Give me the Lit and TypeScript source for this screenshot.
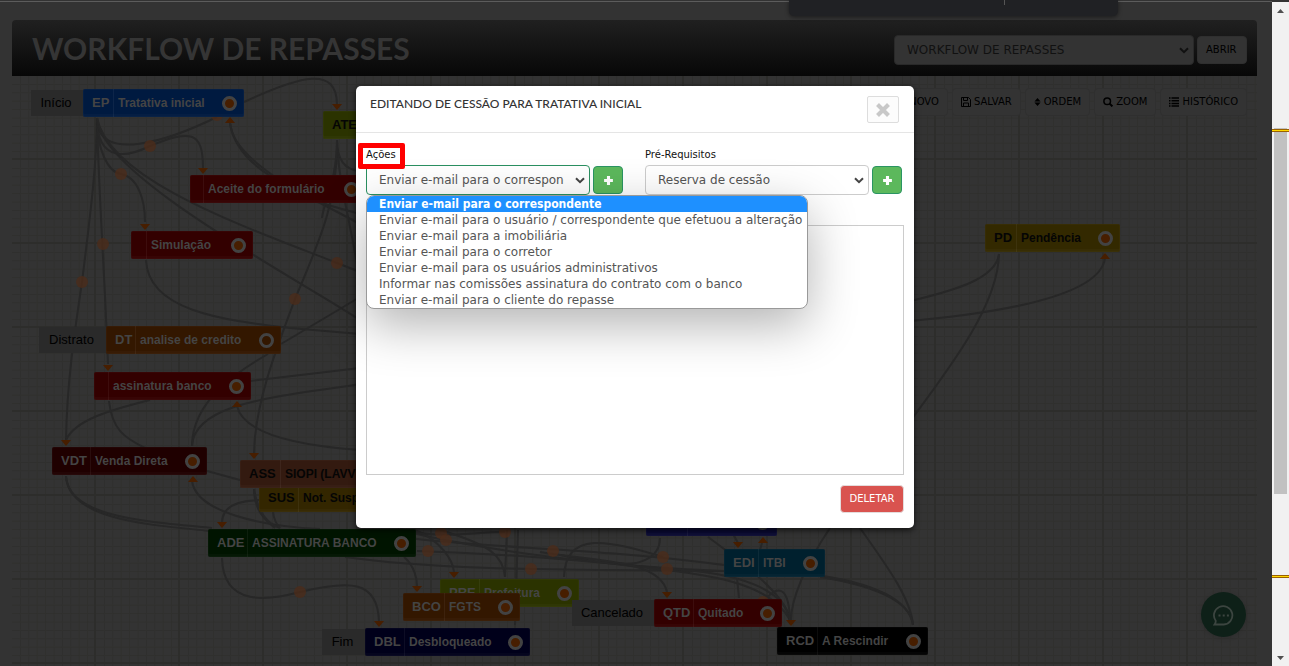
import { LitElement, html, css, svg, nothing } from "lit";
import { customElement, property } from "lit/decorators.js";
import { styleMap } from "lit/directives/style-map.js";
import { classMap } from "lit/directives/class-map.js";

interface StepNode {
  x: number;
  y: number;
  w: number;
  codeW: number;
  code: string;
  name: string;
  color: string;
  dark?: boolean;
  open?: boolean;
  tag?: string;
  tagW?: number;
}

/* Canvas coordinates, measured from the top left corner of the grid. */
const NODES: StepNode[] = [
  { x: 71, y: 13, w: 161, codeW: 31, code: "EP", name: "Tratativa inicial", color: "#001a40", tag: "Início", tagW: 52 },
  { x: 311, y: 35, w: 120, codeW: 40, code: "ATE", name: "", color: "#2b3300", dark: true },
  { x: 178, y: 99, w: 176, codeW: 14, code: "", name: "Aceite do formulário", color: "#330000" },
  { x: 119, y: 155, w: 122, codeW: 16, code: "", name: "Simulação", color: "#330000" },
  { x: 94, y: 250, w: 175, codeW: 30, code: "DT", name: "analise de credito", color: "#331700", open: true, tag: "Distrato", tagW: 67 },
  { x: 82, y: 296, w: 157, codeW: 15, code: "", name: "assinatura banco", color: "#330000" },
  { x: 40, y: 371, w: 155, codeW: 39, code: "VDT", name: "Venda Direta", color: "#1f0000" },
  { x: 247, y: 408, w: 150, codeW: 40, code: "SUS", name: "Not. Suspensa", color: "#332600", dark: true },
  { x: 228, y: 384, w: 160, codeW: 41, code: "ASS", name: "SIOPI (LAVVI)", color: "#331a10", dark: true },
  { x: 196, y: 453, w: 208, codeW: 40, code: "ADE", name: "ASSINATURA BANCO", color: "#001400" },
  { x: 428, y: 503, w: 139, codeW: 40, code: "PRE", name: "Prefeitura", color: "#2b3300" },
  { x: 391, y: 517, w: 117, codeW: 42, code: "BCO", name: "FGTS", color: "#331700" },
  { x: 353, y: 552, w: 165, codeW: 40, code: "DBL", name: "Desbloqueado", color: "#00001a", tag: "Fim", tagW: 43 },
  { x: 634, y: 432, w: 131, codeW: 42, code: "", name: "", color: "#0a0a33" },
  { x: 712, y: 473, w: 101, codeW: 35, code: "EDI", name: "ITBI", color: "#00202e" },
  { x: 642, y: 523, w: 128, codeW: 40, code: "QTD", name: "Quitado", color: "#330000", tag: "Cancelado", tagW: 82 },
  { x: 765, y: 551, w: 151, codeW: 41, code: "RCD", name: "A Rescindir", color: "#000000" },
  { x: 973, y: 148, w: 135, codeW: 32, code: "PD", name: "Pendência", color: "#332900", dark: true },
];

const LINKS: string[] = [
  "M97 118C97 160 91 210 82 282C75 330 67 380 66 440",
  "M97 118C99 200 104 260 108 364",
  "M97 118C97 150 108 172 121 174C138 177 145 200 145 222",
  "M97 118C97 165 130 156 150 146C190 130 203 130 203 168",
  "M97 118C97 165 170 140 217 117",
  "M97 118C99 175 300 280 360 320",
  "M97 118C110 180 240 225 337 263L360 272",
  "M244 102C300 76 337 65 337 105",
  "M230 123C234 150 255 170 290 187L360 224",
  "M230 123C232 150 270 175 310 200L360 214",
  "M146 260C148 310 220 320 290 328L360 334",
  "M337 140C338 200 320 240 295 299C280 340 255 400 254 453",
  "M337 140C337 160 345 170 360 171",
  "M337 140C338 180 350 220 358 270",
  "M337 140C337 180 324 200 322 218",
  "M281 344L360 297",
  "M268 354C240 370 192 400 192 446",
  "M192 446C194 400 290 396 360 384",
  "M250 381L360 368",
  "M66 440C75 420 110 410 150 400",
  "M109 401C112 430 125 438 145 448",
  "M237 406C243 432 290 445 360 450",
  "M66 476C68 520 150 525 210 531",
  "M66 476C68 518 150 522 212 528",
  "M207 471L240 480",
  "M192 481C196 512 260 526 320 529",
  "M222 523C222 505 240 500 262 500",
  "M222 558C223 608 270 600 300 592C350 580 378 580 379 622",
  "M254 489C254 510 265 520 275 528",
  "M254 489C258 515 270 525 280 528",
  "M273 512C274 520 277 525 280 528",
  "M345 557C450 572 600 569 724 571",
  "M400 537C480 548 600 548 724 565",
  "M400 530C480 550 600 566 724 571",
  "M417 551C500 554 560 558 667 569",
  "M400 529C440 540 470 532 505 532",
  "M667 569C740 572 785 590 790 620",
  "M560 555C650 575 760 565 790 620",
  "M708 537C760 575 787 600 790 620",
  "M830 528C805 565 791 600 791 620",
  "M860 528C890 570 911 600 913 625",
  "M820 577C870 585 911 600 913 625",
  "M810 574C870 582 909 598 913 625",
  "M540 552C600 562 660 560 667 592",
  "M564 577C565 530 610 540 663 557",
  "M660 538C660 560 635 566 618 563",
  "M415 530C440 540 453 560 454 572",
  "M404 557C415 566 417 580 417 586",
  "M440 530C490 545 503 555 505 577",
  "M505 577L507 530",
  "M518 530L515 625",
  "M737 578L739 598",
  "M762 543L760 550",
  "M733 534L738 543",
  "M765 600C780 582 789 590 790 620",
  "M999 254C995 285 930 295 900 304",
  "M999 254C998 310 940 380 900 435",
  "M1105 258C1100 300 980 315 900 322",
];

const DOTS: [number, number][] = [
  [150, 146], [121, 174], [103, 244], [82, 282], [337, 263], [295, 299], [217, 115],
  [300, 592], [441, 533], [446, 540], [428, 551], [505, 532], [553, 551], [531, 569],
  [663, 557], [667, 569], [763, 602],
];

const ARROWS_DOWN: [number, number][] = [
  [337, 104], [203, 168], [145, 224], [108, 365], [66, 440], [254, 453], [222, 522],
  [379, 621], [417, 586], [454, 572], [667, 592], [738, 542], [791, 620],
];

const ARROWS_UP: [number, number][] = [
  [230, 117], [237, 401], [193, 476], [763, 537], [1105, 253],
];

const ACTIONS = [
  "Enviar e-mail para o correspondente",
  "Enviar e-mail para o usuário / correspondente que efetuou a alteração",
  "Enviar e-mail para a imobiliária",
  "Enviar e-mail para o corretor",
  "Enviar e-mail para os usuários administrativos",
  "Informar nas comissões assinatura do contrato com o banco",
  "Enviar e-mail para o cliente do repasse",
];

const chevron = html`<svg class="chevron" viewBox="0 0 10 7" aria-hidden="true">
  <path d="M1 1.2L5 5.2L9 1.2" fill="none" stroke="currentColor" stroke-width="2" />
</svg>`;

const plus = html`<svg class="plus" viewBox="0 0 10 10" aria-hidden="true">
  <path d="M3.6 1h2.8v2.6H9v2.8H6.4V9H3.6V6.4H1V3.6h2.6z" fill="#fff" />
</svg>`;

@customElement("flow-node")
class FlowNode extends LitElement {
  @property({ attribute: false }) node!: StepNode;

  static styles = css`
    :host {
      display: flex;
      align-items: center;
      font: bold 12px/28px "Liberation Sans", Arial, sans-serif;
    }
    .tag {
      flex: none;
      box-sizing: border-box;
      height: 26px;
      line-height: 26px;
      padding-right: 2px;
      text-align: center;
      font-weight: normal;
      font-size: 13px;
      color: #000;
      background: #2a2a2a;
    }
    .body {
      flex: none;
      box-sizing: border-box;
      display: flex;
      align-items: center;
      height: 28px;
      border-radius: 2px;
      color: #444;
      overflow: hidden;
      box-shadow: inset 0 0 0 1px rgba(255, 255, 255, 0.02), inset 0 -3px 0 rgba(255, 255, 255, 0.02);
    }
    .dark {
      color: #050505;
    }
    .code {
      flex: none;
      box-sizing: border-box;
      padding-left: 9px;
      height: 28px;
      border-right: 1px solid rgba(255, 255, 255, 0.05);
      font-size: 13px;
      font-weight: bold;
    }
    .name {
      flex: 1;
      padding-left: 4px;
      white-space: nowrap;
    }
    .ring {
      flex: none;
      box-sizing: border-box;
      width: 15px;
      height: 15px;
      margin-right: 7px;
      border: 3px solid #424242;
      border-radius: 50%;
      background: #471e00;
    }
    .open {
      background: #331700;
    }
  `;

  render() {
    const n = this.node;
    return html`
      ${n.tag ? html`<span class="tag" style=${styleMap({ width: `${n.tagW}px` })}>${n.tag}</span>` : nothing}
      <div class=${classMap({ body: true, dark: !!n.dark })} style=${styleMap({ width: `${n.w}px`, background: n.color })}>
        <span class="code" style=${styleMap({ width: `${n.codeW}px` })}>${n.code}</span>
        <span class="name">${n.name}</span>
        <span class=${classMap({ ring: true, open: !!n.open })}></span>
      </div>
    `;
  }
}

@customElement("app-root")
class AppRoot extends LitElement {
  static styles = css`
    :host {
      display: flex;
      height: 100vh;
      overflow: hidden;
      background: #333;
      font: 12px/16px "DejaVu Sans", Verdana, sans-serif;
      color: #555;
    }
    button,
    select,
    textarea {
      font: inherit;
      margin: 0;
      box-sizing: border-box;
    }
    h1,
    h2,
    ul {
      margin: 0;
      padding: 0;
    }
    .stage {
      position: relative;
      flex: 1;
      min-width: 0;
      display: flex;
      flex-direction: column;
      box-sizing: border-box;
      padding: 18px 15px 0 12px;
      border-top: 1px solid #5c5c5c;
      margin-top: 1px;
    }
    .top-panel {
      position: absolute;
      top: -2px;
      left: 789px;
      width: 329px;
      height: 16px;
      display: flex;
      justify-content: center;
      border-radius: 0 0 5px 5px;
      background: #202124;
      box-shadow: 0 1px 4px rgba(0, 0, 0, 0.5);
    }
    .top-panel::before {
      content: "";
      width: 1px;
      height: 5px;
      margin-left: 102px;
      background: #555;
    }
    .bar {
      flex: none;
      display: flex;
      align-items: center;
      justify-content: space-between;
      height: 56px;
      box-sizing: border-box;
      padding: 3px 10px 0 20px;
      border-radius: 4px 4px 0 0;
      background: linear-gradient(#202020, #070707);
    }
    .bar h1 {
      padding-bottom: 4px;
      font: bold 30px/40px Lato, sans-serif;
      color: #353535;
    }
    .open-form {
      display: flex;
      align-items: center;
      gap: 3px;
    }
    .open-form .dim-button {
      width: 50px;
    }
    .select-wrap {
      position: relative;
      display: block;
    }
    .select-wrap select {
      appearance: none;
      display: block;
      width: 100%;
      height: 30px;
      padding: 0 25px 0 12px;
      border: 1px solid #ccc;
      border-radius: 4px;
      background: #fff;
      color: #555;
      outline: none;
    }
    .chevron {
      position: absolute;
      right: 5px;
      top: 12px;
      width: 10px;
      height: 7px;
      color: #444;
      pointer-events: none;
    }
    .flow-select {
      width: 300px;
    }
    .flow-select select {
      background: #333;
      border-color: #292929;
      color: #111;
    }
    .flow-select .chevron {
      color: #111;
    }
    .dim-button {
      display: flex;
      align-items: center;
      gap: 3px;
      height: 28px;
      padding: 0 8px;
      border: 1px solid #2f2f2f;
      border-radius: 4px;
      background: #333;
      color: #000;
      font-size: 10px;
    }
    .dim-button svg {
      width: 10px;
      height: 10px;
    }
    .dim-button .sort {
      width: 7px;
    }
    .canvas {
      position: relative;
      flex: 1;
      overflow: hidden;
    }
    .wires {
      position: absolute;
      inset: 0;
      width: 100%;
      height: 100%;
    }
    .placed {
      position: absolute;
    }
    .tools {
      position: relative;
      display: flex;
      justify-content: flex-end;
      gap: 4px;
      padding: 12px 10px 0 0;
    }
    .chat {
      position: absolute;
      right: 26px;
      bottom: 29px;
      width: 45px;
      height: 45px;
      padding: 0;
      border: 0;
      border-radius: 50%;
      background: #0e2018;
      box-shadow: 0 1px 5px rgba(0, 0, 0, 0.15);
    }
    .chat svg {
      display: block;
      width: 21px;
      height: 21px;
      margin: 1px auto 0;
    }
    .overlay {
      position: absolute;
      inset: 0;
      display: flex;
      justify-content: center;
      align-items: flex-start;
      padding: 84px 2px 0 0;
    }
    .modal {
      width: 558px;
      border-radius: 5px;
      background: #fff;
      box-shadow: 0 2px 6px rgba(0, 0, 0, 0.7);
    }
    .modal-head {
      display: flex;
      justify-content: space-between;
      align-items: flex-start;
      padding: 10px 15px 9px 14px;
      border-bottom: 1px solid #e5e5e5;
    }
    .modal-head h2 {
      font: 500 12px/16px Lato, sans-serif;
      color: #333;
    }
    .close {
      width: 32px;
      height: 27px;
      padding: 0;
      border: 1px solid #ddd;
      border-radius: 2px;
      background: #fcfcfc;
    }
    .close svg {
      display: block;
      width: 16px;
      height: 16px;
      margin: auto;
    }
    .modal-body {
      padding: 14px 10px 15px;
    }
    .fields {
      display: grid;
      grid-template-columns: 1fr 1fr;
      gap: 22px;
      padding-right: 2px;
    }
    .field label {
      display: block;
      font-size: 10px;
      line-height: 16px;
      height: 18px;
      color: #111;
    }
    .field-row {
      position: relative;
      display: flex;
      align-items: center;
      gap: 3px;
    }
    .field-row .select-wrap {
      flex: 1;
      min-width: 0;
    }
    .add {
      flex: none;
      width: 30px;
      height: 28px;
      padding: 0;
      border: 1px solid #2a9463;
      border-radius: 4px;
      background: #5cb85c;
    }
    .plus {
      display: block;
      width: 11px;
      height: 11px;
      margin: auto;
    }
    .focus select {
      border-color: #2a9060;
    }
    .options {
      position: absolute;
      z-index: 2;
      top: 30px;
      left: 0;
      list-style: none;
      border: 1px solid #999;
      border-radius: 8px;
      overflow: hidden;
      background: #fff;
      box-shadow: 0 16px 50px rgba(0, 0, 0, 0.3);
    }
    .options li {
      height: 16px;
      line-height: 16px;
      padding: 0 5px 0 12px;
      white-space: nowrap;
    }
    .options .active {
      background: #1e90ff;
      color: #fff;
      font-family: "DejaVu Sans Condensed", "DejaVu Sans", sans-serif;
      font-weight: bold;
    }
    .mark {
      position: absolute;
      top: -22px;
      left: -8px;
      width: 37px;
      height: 16px;
      border: 5px solid #f00;
      border-radius: 2px;
    }
    .log {
      display: block;
      width: 100%;
      height: 250px;
      margin-top: 30px;
      border: 1px solid #ccc;
      background: transparent;
      resize: none;
      outline: none;
    }
    .modal-foot {
      display: flex;
      justify-content: flex-end;
      padding-top: 10px;
    }
    .delete {
      height: 28px;
      width: 64px;
      padding: 0;
      border: 1px solid #e4dcdc;
      border-radius: 4px;
      background: #d9534f;
      color: #fff;
      font-size: 10px;
    }
    .scroll {
      flex: none;
      width: 17px;
      margin-top: 2px;
      display: flex;
      flex-direction: column;
      align-items: center;
      background: #f1f1f1;
      position: relative;
    }
    .scroll svg {
      width: 17px;
      height: 17px;
    }
    .track {
      flex: 1;
      width: 13px;
      padding-top: 109px;
    }
    .thumb {
      height: 366px;
      background: #c1c1c1;
    }
    .hit {
      position: absolute;
      left: 0;
      right: 0;
      height: 1px;
      border: 1px solid #9a6200;
      border-width: 1px 0;
      background: #ffd800;
    }
    .hit-a {
      top: 127px;
    }
    .hit-b {
      top: 573px;
    }
  `;

  private renderWires() {
    return html`<svg class="wires" aria-hidden="true">
      <defs>
        <pattern id="grid" width="84" height="84" patternUnits="userSpaceOnUse">
          <path
            d="M8.4 0V84M16.8 0V84M25.2 0V84M33.6 0V84M42 0V84M50.4 0V84M58.8 0V84M67.2 0V84M75.6 0V84M0 8.4H84M0 16.8H84M0 25.2H84M0 33.6H84M0 42H84M0 50.4H84M0 58.8H84M0 67.2H84M0 75.6H84"
            stroke="#2f2f2d"
            stroke-width="1"
          />
          <path d="M83 0V84M0 83H84" stroke="#2d2d2b" stroke-width="2" />
        </pattern>
      </defs>
      <rect width="100%" height="100%" fill="url(#grid)" />
      <g transform="translate(-12 -76)">
        <g fill="none" stroke="#272727" stroke-width="2">${LINKS.map((d) => svg`<path d=${d} />`)}</g>
        <g fill="#4b2c1a" fill-opacity="0.8">${DOTS.map(([x, y]) => svg`<circle cx=${x} cy=${y} r="6" />`)}</g>
        <g fill="#471e00">
          ${ARROWS_DOWN.map(([x, y]) => svg`<path d=${`M${x - 5} ${y}h10l-5 6z`} />`)}
          ${ARROWS_UP.map(([x, y]) => svg`<path d=${`M${x - 5} ${y + 6}h10l-5 -6z`} />`)}
        </g>
      </g>
    </svg>`;
  }

  render() {
    return html`
      <main class="stage">
        <header class="bar">
          <h1>WORKFLOW DE REPASSES</h1>
          <div class="open-form">
            <div class="select-wrap flow-select">
              <select aria-label="Workflow"><option>WORKFLOW DE REPASSES</option></select>
              ${chevron}
            </div>
            <button class="dim-button">ABRIR</button>
          </div>
        </header>
        <section class="canvas">
          ${this.renderWires()}
          ${NODES.map(
            (n) => html`<flow-node
              class="placed"
              .node=${n}
              style=${styleMap({ left: `${n.x - (n.tagW ?? 0)}px`, top: `${n.y}px` })}
            ></flow-node>`
          )}
          <nav class="tools">
            <button class="dim-button">NOVO</button>
            <button class="dim-button">
              <svg viewBox="0 0 10 10"><path d="M.5 .5h7l2 2v7h-9zM2.5 .5v3h4v-3M2.5 9.5v-3.500h5v3.500" fill="none" stroke="#000" /></svg>SALVAR
            </button>
            <button class="dim-button">
              <svg class="sort" viewBox="1 0 8 10"><path d="M1.500 4.300h7L5 .5zM1.500 5.700h7L5 9.500z" /></svg>ORDEM
            </button>
            <button class="dim-button">
              <svg viewBox="0 0 10 10"><circle cx="4.200" cy="4.200" r="3.300" fill="none" stroke="#000" stroke-width="1.500" /><path d="M6.600 6.600L9.400 9.400" stroke="#000" stroke-width="2" /></svg>ZOOM
            </button>
            <button class="dim-button">
              <svg viewBox="0 0 10 10"><path d="M0 1h1.500M0 3.700h1.500M0 6.400h1.500M0 9h1.500M2.500 1H10M2.500 3.700H10M2.500 6.400H10M2.500 9H10" stroke="#000" stroke-width="1.500" /></svg>HISTÓRICO
            </button>
          </nav>
        </section>
        <button class="chat" aria-label="Chat">
          <svg viewBox="0 0 21 21">
            <path d="M1.500 19.500c1-1.200 1.400-2.400 1.200-3.800A9.200 9.200 0 1 1 10.800 19.500z" fill="none" stroke="#3c4540" stroke-width="1.800" />
            <path d="M5.500 9.500h2v2h-2zM9.700 9.500h2v2h-2zM13.900 9.500h2v2h-2z" fill="#3c4540" />
          </svg>
        </button>
        <div class="top-panel"></div>
        <div class="overlay">
          <div class="modal" role="dialog" aria-labelledby="modal-title">
            <div class="modal-head">
              <h2 id="modal-title">EDITANDO DE CESSÃO PARA TRATATIVA INICIAL</h2>
              <button class="close" aria-label="Fechar">
                <svg viewBox="0 0 14 14"><path d="M2.200 2.200L11.800 11.800M11.800 2.200L2.200 11.800" stroke="#c8c8c8" stroke-width="3.600" /></svg>
              </button>
            </div>
            <div class="modal-body">
              <div class="fields">
                <div class="field">
                  <label for="acoes">Ações</label>
                  <div class="field-row">
                    <div class="select-wrap focus">
                      <select id="acoes">${ACTIONS.map((a) => html`<option>${a}</option>`)}</select>
                      ${chevron}
                    </div>
                    <button class="add" aria-label="Adicionar ação">${plus}</button>
                    <ul class="options" role="listbox">
                      ${ACTIONS.map(
                        (a, i) => html`<li role="option" class=${classMap({ active: i === 0 })} aria-selected=${i === 0}>${a}</li>`
                      )}
                    </ul>
                    <div class="mark"></div>
                  </div>
                </div>
                <div class="field">
                  <label for="requisitos">Pré-Requisitos</label>
                  <div class="field-row">
                    <div class="select-wrap">
                      <select id="requisitos"><option>Reserva de cessão</option></select>
                      ${chevron}
                    </div>
                    <button class="add" aria-label="Adicionar pré-requisito">${plus}</button>
                  </div>
                </div>
              </div>
              <textarea class="log" readonly aria-label="Itens"></textarea>
              <div class="modal-foot"><button class="delete">DELETAR</button></div>
            </div>
          </div>
        </div>
      </main>
      <aside class="scroll" aria-hidden="true">
        <svg viewBox="0 0 17 17"><path d="M5 11h7L8.500 7z" fill="#505050" /></svg>
        <div class="track"><div class="thumb"></div></div>
        <svg viewBox="0 0 17 17"><path d="M5 7h7L8.500 11z" fill="#505050" /></svg>
        <div class="hit hit-a"></div>
        <div class="hit hit-b"></div>
      </aside>
    `;
  }
}
